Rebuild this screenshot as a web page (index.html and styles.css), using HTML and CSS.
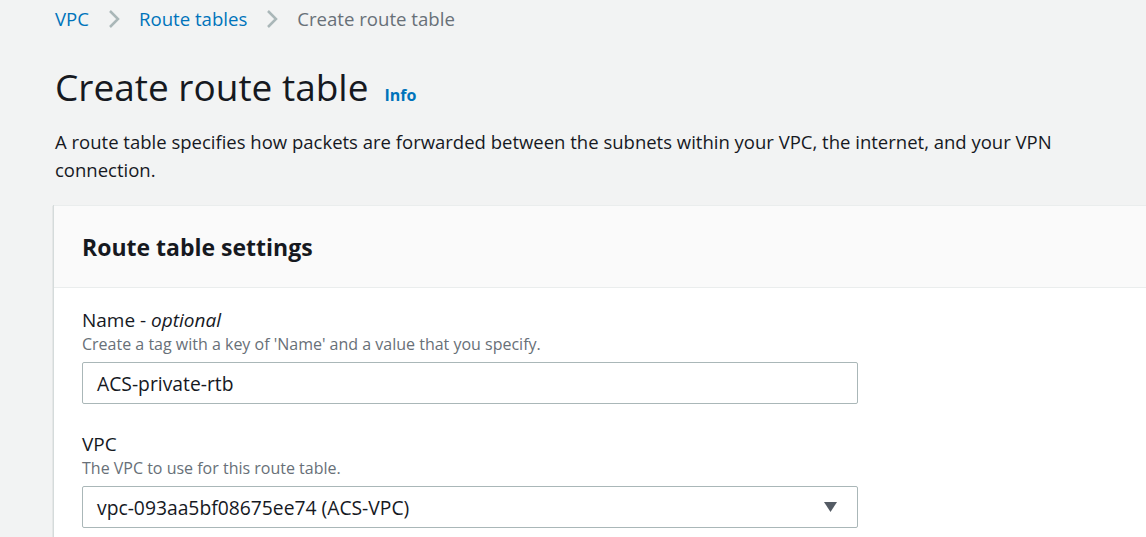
FILE: index.html
```html
<!DOCTYPE html>
<html>
<head>
<meta charset="utf-8">
<link rel="stylesheet" href="styles.css">
</head>
<body>
<div class="page">
  <nav class="crumbs">
    <a class="crumb-link">VPC</a>
    <svg class="chev" width="12" height="20" viewBox="0 0 12 20"><path d="M2 2 L10 10 L2 18" fill="none" stroke="#aab7b8" stroke-width="2.5"/></svg>
    <a class="crumb-link">Route tables</a>
    <svg class="chev" width="12" height="20" viewBox="0 0 12 20"><path d="M2 2 L10 10 L2 18" fill="none" stroke="#aab7b8" stroke-width="2.5"/></svg>
    <span class="crumb-current">Create route table</span>
  </nav>
  <div class="title-row">
    <h1 class="title">Create route table</h1>
    <a class="info">Info</a>
  </div>
  <p class="lead">A route table specifies how packets are forwarded between the subnets within your VPC, the internet, and your VPN connection.</p>
  <section class="card">
    <div class="card-head"><h2 class="card-title">Route table settings</h2></div>
    <div class="card-body">
      <div class="field">
        <div class="label">Name - <i>optional</i></div>
        <div class="desc">Create a tag with a key of 'Name' and a value that you specify.</div>
        <div class="input">ACS-private-rtb</div>
      </div>
      <div class="field">
        <div class="label">VPC</div>
        <div class="desc">The VPC to use for this route table.</div>
        <div class="input select">
          <span>vpc-093aa5bf08675ee74 (ACS-VPC)</span>
          <svg class="caret" width="13" height="10" viewBox="0 0 13 10"><path d="M0 0 H13 L6.5 10 Z" fill="#545b64"/></svg>
        </div>
      </div>
    </div>
  </section>
</div>
</body>
</html>
```
FILE: styles.css
```css
html, body { margin: 0; padding: 0; }
body {
  background: #f2f3f3;
  font-family: "Open Sans", "Noto Sans", sans-serif;
  color: #16191f;
  overflow: hidden;
  width: 1146px;
  height: 537px;
}
.page { padding: 0 0 0 55px; }
.crumbs {
  display: flex;
  align-items: center;
  height: 37px;
  font-size: 18.6px;
}
.crumb-link { color: #0073bb; }
.chev { margin: 0 19px 0 19px; }
.crumb-current { color: #687078; }
.title-row {
  display: flex;
  align-items: baseline;
  margin-top: 27px;
}
.title {
  margin: 0;
  font-size: 37px;
  font-weight: 400;
  line-height: 46px;
}
.info {
  color: #0073bb;
  font-weight: 700;
  font-size: 16px;
  margin-left: 16px;
}
.lead {
  margin: 18px 0 0 0;
  font-size: 18.5px;
  line-height: 28px;
  max-width: 1040px;
}
.card {
  margin-top: 21px;
  margin-left: -2px;
  background: #fff;
  border-left: 1px solid #d5dbdb;
  box-shadow: 0 1px 1px 0 rgba(0,28,36,.3);
}
.card-head {
  background: #fafafa;
  border-top: 1px solid #eaeded;
  border-bottom: 1px solid #eaeded;
  height: 81px;
  display: flex;
  align-items: center;
  padding-left: 28px;
}
.card-title {
  margin: 0;
  font-size: 23px;
  font-weight: 700;
}
.card-body { padding: 19px 0 12px 28px; }
.field { width: 776px; margin-bottom: 27px; }
.field:last-child { margin-bottom: 0; }
.label { font-size: 19px; line-height: 26px; }
.desc { font-size: 16px; line-height: 22px; color: #687078; }
.input {
  margin-top: 7px;
  height: 40px;
  border: 1px solid #aab7b8;
  border-radius: 2px;
  display: flex;
  align-items: center;
  padding: 0 14px;
  font-size: 19.3px;
  background: #fff;
}
.select { justify-content: space-between; padding-right: 20px; }
```
